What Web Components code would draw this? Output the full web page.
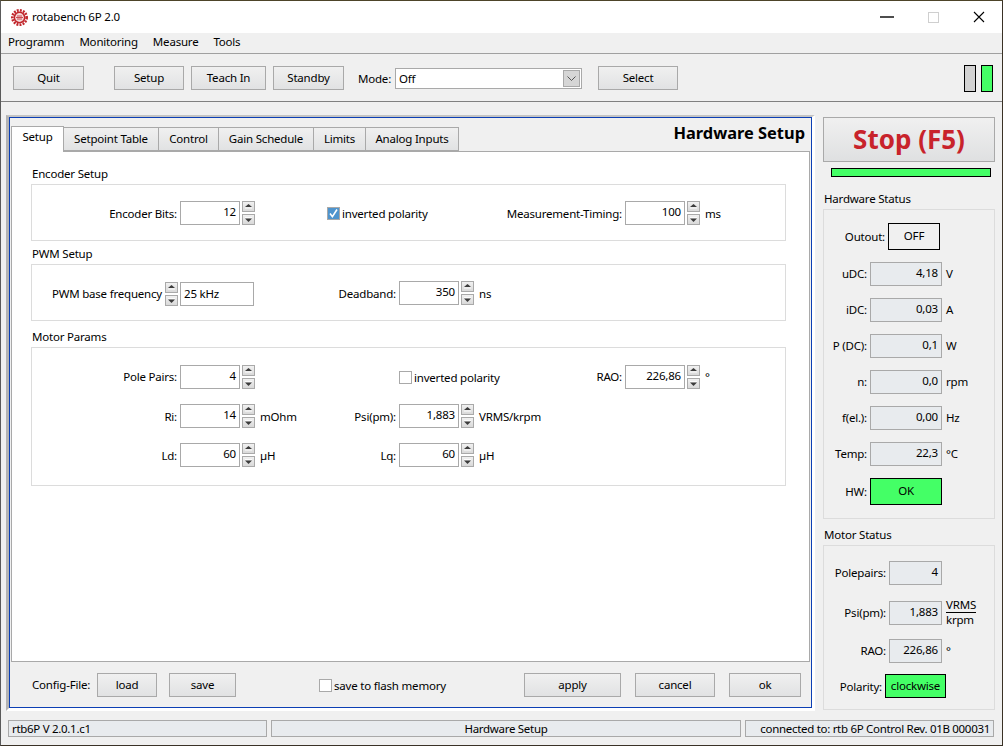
<!DOCTYPE html>
<html>
<head>
<meta charset="utf-8">
<title>rotabench 6P 2.0</title>
<style>
  html, body { margin: 0; padding: 0; background: #3a3226; }
  body { font: 11.5px "Noto Sans", "Liberation Sans", sans-serif; letter-spacing: -0.2px; color: #000; }
</style>
</head>
<body>
<rtb-window>
  <rtb-titlebar slot="top" caption="rotabench 6P 2.0"></rtb-titlebar>
  <rtb-menubar slot="top" items="Programm,Monitoring,Measure,Tools"></rtb-menubar>
  <rtb-toolbar slot="top">
    <rtb-button style="width:71px">Quit</rtb-button>
    <rtb-button style="width:70px;margin-left:30px">Setup</rtb-button>
    <rtb-button style="width:75px;margin-left:7px">Teach In</rtb-button>
    <rtb-button style="width:71px;margin-left:7px">Standby</rtb-button>
    <rtb-combo label="Mode:" value="Off" style="margin-left:14px"></rtb-combo>
    <rtb-button style="width:80px;margin-left:16px">Select</rtb-button>
    <rtb-led color="#d2d2d2" style="margin-left:auto"></rtb-led>
    <rtb-led color="#44ff66" style="margin-left:5px"></rtb-led>
  </rtb-toolbar>

  <rtb-panel slot="left">
    <rtb-tabs slot="tabs" heading="Hardware Setup">
      <rtb-tab active style="width:53px">Setup</rtb-tab>
      <rtb-tab style="width:95px">Setpoint Table</rtb-tab>
      <rtb-tab style="width:60px">Control</rtb-tab>
      <rtb-tab style="width:95px">Gain Schedule</rtb-tab>
      <rtb-tab style="width:52px">Limits</rtb-tab>
      <rtb-tab style="width:93px">Analog Inputs</rtb-tab>
    </rtb-tabs>

    <rtb-group caption="Encoder Setup" style="margin-top:0">
      <rtb-row>
        <rtb-spin label="Encoder Bits:" value="12" style="--lw:145px"></rtb-spin>
        <rtb-check style="margin-left:27px" checked>inverted polarity</rtb-check>
        <rtb-spin label="Measurement-Timing:" value="100" unit="ms" style="--lw:122px"></rtb-spin>
      </rtb-row>
    </rtb-group>

    <rtb-group caption="PWM Setup" style="margin-top:4px">
      <rtb-row>
        <rtb-freq label="PWM base frequency" value="25 kHz"></rtb-freq>
        <rtb-spin label="Deadband:" value="350" unit="ns" style="--lw:96px"></rtb-spin>
      </rtb-row>
    </rtb-group>

    <rtb-group caption="Motor Params" style="margin-top:7px;--pt:17px;--pb:18px">
      <rtb-row>
        <rtb-spin label="Pole Pairs:" value="4" style="--lw:145px;--ly:-1px"></rtb-spin>
        <rtb-check style="margin-left:99px">inverted polarity</rtb-check>
        <rtb-spin label="RAO:" value="226,86" unit="°" style="--lw:122px;--ly:-1px"></rtb-spin>
      </rtb-row>
      <rtb-row style="margin-top:15px">
        <rtb-spin label="Ri:" value="14" unit="mOhm" style="--lw:145px"></rtb-spin>
        <rtb-spin label="Psi(pm):" value="1,883" unit="VRMS/krpm" style="--lw:96px"></rtb-spin>
      </rtb-row>
      <rtb-row style="margin-top:15px">
        <rtb-spin label="Ld:" value="60" unit="µH" style="--lw:145px"></rtb-spin>
        <rtb-spin label="Lq:" value="60" unit="µH" style="--lw:96px"></rtb-spin>
      </rtb-row>
    </rtb-group>

    <span slot="footer" style="width:65px">Config-File:</span>
    <rtb-button slot="footer" style="width:60px">load</rtb-button>
    <rtb-button slot="footer" style="width:67px;margin-left:12px">save</rtb-button>
    <rtb-check slot="footer" style="margin-left:83px">save to flash memory</rtb-check>
    <rtb-button slot="footer" style="width:97px;margin-left:auto">apply</rtb-button>
    <rtb-button slot="footer" style="width:80px;margin-left:14px">cancel</rtb-button>
    <rtb-button slot="footer" style="width:72px;margin-left:14px">ok</rtb-button>
  </rtb-panel>

  <rtb-side slot="right">
    <rtb-stop>Stop (F5)</rtb-stop>
    <rtb-bar></rtb-bar>
    <rtb-statusgroup caption="Hardware Status" style="margin-top:14px;--pt:13px;--pb:13px">
      <rtb-stat label="Outout:" value="OFF" kind="off" style="--lw:64px;--vw:52px;--vh:27px;--ly:0px"></rtb-stat>
      <rtb-stat label="uDC:" value="4,18" unit="V" style="--lw:46px;--vw:72px;margin-top:12px"></rtb-stat>
      <rtb-stat label="iDC:" value="0,03" unit="A" style="--lw:46px;--vw:72px;margin-top:12px"></rtb-stat>
      <rtb-stat label="P (DC):" value="0,1" unit="W" style="--lw:46px;--vw:72px;margin-top:12px"></rtb-stat>
      <rtb-stat label="n:" value="0,0" unit="rpm" style="--lw:46px;--vw:72px;margin-top:12px"></rtb-stat>
      <rtb-stat label="f(el.):" value="0,00" unit="Hz" style="--lw:46px;--vw:72px;margin-top:12px"></rtb-stat>
      <rtb-stat label="Temp:" value="22,3" unit="°C" style="--lw:46px;--vw:72px;margin-top:12px"></rtb-stat>
      <rtb-stat label="HW:" value="OK" kind="ok" style="--lw:46px;--vw:72px;--vh:27px;--ly:0px;margin-top:12px"></rtb-stat>
    </rtb-statusgroup>
    <rtb-statusgroup caption="Motor Status" style="margin-top:8px;--pt:15px;--pb:11px">
      <rtb-stat label="Polepairs:" value="4" style="--lw:65px;--vw:53px"></rtb-stat>
      <rtb-stat label="Psi(pm):" value="1,883" style="--lw:65px;--vw:53px;margin-top:16px">
        <span style="display:block;line-height:14px"><span style="display:block;border-bottom:1px solid #000">VRMS</span>krpm</span>
      </rtb-stat>
      <rtb-stat label="RAO:" value="226,86" unit="°" style="--lw:65px;--vw:53px;margin-top:14px"></rtb-stat>
      <rtb-stat label="Polarity:" value="clockwise" kind="ok" style="--lw:61px;--vw:61px;--ly:0px;--vlh:22px;margin-top:11px"></rtb-stat>
    </rtb-statusgroup>
  </rtb-side>

  <rtb-statusbar slot="bottom">
    <rtb-cell style="width:259px">rtb6P V 2.0.1.c1</rtb-cell>
    <rtb-cell style="width:470px;text-align:center">Hardware Setup</rtb-cell>
    <rtb-cell style="width:249px;text-align:right">connected to: rtb 6P Control Rev. 01B 000031</rtb-cell>
  </rtb-statusbar>
</rtb-window>

<script>
// small base class, every element only has to give its html
class RtbElement extends HTMLElement {
    constructor(){
        super()
        this.attachShadow({mode: "open"})
    }
    connectedCallback(){
        this.shadowRoot.innerHTML = this.getTemplate()
    }
    attr(name, def = ''){
        return this.hasAttribute(name) ? this.getAttribute(name) : def
    }
}

const SPIN_UP = `<svg width="7" height="5" viewBox="0 0 7 5"><path d="M3.5 0L7 3H0z" fill="#3c3c3c"/><path d="M0 4h7" stroke="#fbfbfb" stroke-width="1"/></svg>`
const SPIN_DOWN = `<svg width="7" height="5" viewBox="0 0 7 5"><path d="M0 .5h7" stroke="#fbfbfb" stroke-width="1"/><path d="M0 1.5h7L3.5 5z" fill="#3c3c3c"/></svg>`

class RtbWindow extends RtbElement {
    getTemplate(){
        return `
        <style>
            :host { display: flex; flex-direction: column; box-sizing: border-box; width: 1003px; height: 746px;
                background: #f0f0f0; border-top: 1px solid #4d4429; border-left: 1px solid #5a5a5a; border-right: 1px solid #3a3226; border-bottom: 1px solid #3a3226; overflow: hidden; }
            .main { display: flex; flex: 1; min-height: 0; }
        </style>
        <slot name="top"></slot>
        <div class="main"><slot name="left"></slot><slot name="right"></slot></div>
        <slot name="bottom"></slot>`
    }
}

class RtbTitlebar extends RtbElement {
    getTemplate(){
        return `
        <style>
            :host { display: flex; align-items: center; height: 32px; background: #fff; padding-left: 10px; flex: none; }
            .logo { width: 17px; height: 17px; margin-right: 4px; }
            .cap { padding-bottom: 2px; }
            .ctl { display: flex; margin-left: auto; }
            .ctl div { width: 46px; height: 32px; display: flex; align-items: center; justify-content: center; }
        </style>
        <svg class="logo" viewBox="0 0 17 17">
            <circle cx="8.5" cy="8.5" r="7.2" fill="none" stroke="#c1272d" stroke-width="2.6" stroke-dasharray="1.9 1.2"/>
            <circle cx="8.5" cy="8.5" r="6" fill="#c1272d"/>
            <circle cx="8.5" cy="8.5" r="4.4" fill="#f4d9da"/>
            <path d="M5 8.5h7M6 7h5M6 10h5" stroke="#c1272d" stroke-width=".8"/>
        </svg>
        <span class="cap">${this.attr('caption')}</span>
        <div class="ctl">
            <div><svg width="14" height="2"><path d="M0 1h14" stroke="#000" stroke-width="1.4"/></svg></div>
            <div><svg width="11" height="11"><rect x=".5" y=".5" width="10" height="10" fill="none" stroke="#cfcfcf"/></svg></div>
            <div><svg width="12" height="12"><path d="M1 1l10 10M11 1L1 11" stroke="#000" stroke-width="1.1"/></svg></div>
        </div>`
    }
}

class RtbMenubar extends RtbElement {
    getTemplate(){
        const items = this.attr('items').split(',').map(t => `<span>${t}</span>`).join('')
        return `
        <style>
            :host { display: flex; align-items: center; gap: 15px; box-sizing: border-box; height: 21px; padding: 0 0 4px 7px; flex: none;
                background: #f0f0f0; border-bottom: 1px solid #a0a0a0; }
        </style>
        ${items}`
    }
}

class RtbToolbar extends RtbElement {
    getTemplate(){
        return `
        <style>
            :host { display: flex; align-items: center; box-sizing: border-box; height: 48px; flex: none; padding: 1px 9px 0 12px;
                background: #f0f0f0; border-bottom: 1px solid #808080; }
        </style>
        <slot></slot>`
    }
}

class RtbButton extends RtbElement {
    getTemplate(){
        return `
        <style>
            :host { display: inline-flex; align-items: center; justify-content: center; box-sizing: border-box; height: 24px; flex: none;
                border: 1px solid #a9a9a9; background: linear-gradient(#f0f0f0, #e1e2e3); padding-bottom: 2px; }
        </style>
        <slot></slot>`
    }
}

class RtbCombo extends RtbElement {
    getTemplate(){
        return `
        <style>
            :host { display: inline-flex; align-items: center; flex: none; }
            .l { width: 34px; }
            .box { display: flex; align-items: center; box-sizing: border-box; width: 187px; height: 21px; margin-left: 3px;
                border: 1px solid #a9a9a9; background: #fff; padding: 0 1px 0 3px; }
            .btn { margin-left: auto; width: 17px; height: 17px; box-sizing: border-box; border: 1px solid #a9a9a9; background: #d6d6d6;
                display: flex; align-items: center; justify-content: center; }
        </style>
        <span class="l">${this.attr('label')}</span>
        <div class="box"><span>${this.attr('value')}</span>
            <div class="btn"><svg width="9" height="5"><path d="M.5.5l4 4 4-4" fill="none" stroke="#555"/></svg></div>
        </div>`
    }
}

class RtbLed extends RtbElement {
    getTemplate(){
        return `
        <style>
            :host { display: block; box-sizing: border-box; width: 12px; height: 27px; flex: none; border: 1px solid #000; background: ${this.attr('color')}; }
        </style>`
    }
}

class RtbPanel extends RtbElement {
    getTemplate(){
        return `
        <style>
            :host { display: flex; flex-direction: column; box-sizing: border-box; width: 809px; height: 596px; margin: 13px 0 0 5px; flex: none;
                border-style: solid; border-width: 2px 3px 3px 3px; border-color: #c4c4c4 #fff #fff #b4b4b4; }
            .blue { flex: 1; display: flex; flex-direction: column; border: 1px solid #0c3fb4; min-height: 0; padding-top: 9px; }
            .pane { box-sizing: border-box; height: 511px; margin: 0 1px; border: 1px solid #a9a9a9; background: #fff; padding: 13px 23px 0 19px; }
            .tabs { margin: 0 1px; height: 24px; display: block; }
            .footer { display: flex; align-items: flex-start; padding: 11px 10px 0 22px; }
            slot[name=footer]::slotted(span) { line-height: 24px; }
        </style>
        <div class="blue">
            <div class="tabs"><slot name="tabs"></slot></div>
            <div class="pane"><slot></slot></div>
            <div class="footer"><slot name="footer"></slot></div>
        </div>`
    }
}

class RtbTabs extends RtbElement {
    getTemplate(){
        return `
        <style>
            :host { display: flex; height: 24px; position: relative; z-index: 1; }
            .h { margin-left: auto; margin-right: 5px; font-weight: bold; font-size: 16.4px; letter-spacing: 0; line-height: 12px; white-space: nowrap; }
        </style>
        <slot></slot>
        <span class="h">${this.attr('heading')}</span>`
    }
}

class RtbTab extends RtbElement {
    getTemplate(){
        const on = this.hasAttribute('active')
        return `
        <style>
            :host { display: flex; align-items: center; justify-content: center; box-sizing: border-box; flex: none; height: ${on ? 26 : 24}px;
                ${on ? 'margin-top:-1px;' : ''} border: 1px solid #a9a9a9; border-left: ${on ? '1px solid #a9a9a9' : 'none'};
                border-bottom: ${on ? 'none' : '1px solid #a9a9a9'};
                background: ${on ? '#fff' : 'linear-gradient(#f0f0f0, #e1e2e3)'}; padding-bottom: ${on ? 6 : 2}px; }
        </style>
        <slot></slot>`
    }
}

class RtbGroup extends RtbElement {
    getTemplate(){
        return `
        <style>
            :host { display: block; }
            .t { line-height: 16px; margin: 0 0 2px 1px; padding-top: 1px; }
            .b { border: 1px solid #dcdcdc; padding: var(--pt, 16px) 0 var(--pb, 15px) 0; }
        </style>
        <div class="t">${this.attr('caption')}</div>
        <div class="b"><slot></slot></div>`
    }
}

class RtbRow extends RtbElement {
    getTemplate(){
        return `
        <style>
            :host { display: grid; grid-template-columns: 268px 200px 1fr; align-items: start; }
        </style>
        <slot></slot>`
    }
}

class RtbSpinButtons extends RtbElement {
    getTemplate(){
        return `
        <style>
            :host { display: flex; flex-direction: column; gap: 2px; width: 13px; flex: none; }
            div { box-sizing: border-box; height: 11px; border: 1px solid #a9a9a9; background: linear-gradient(#f1f1f1, #d9d9d9);
                display: flex; align-items: center; justify-content: center; }
        </style>
        <div>${SPIN_UP}</div><div>${SPIN_DOWN}</div>`
    }
}

class RtbSpin extends RtbElement {
    getTemplate(){
        return `
        <style>
            :host { display: flex; align-items: center; white-space: nowrap; height: 24px; }
            .l { width: var(--lw, 100px); text-align: right; flex: none; position: relative; top: var(--ly, 0px); }
            .v { box-sizing: border-box; width: 60px; height: 24px; margin: 0 2px 0 3px; flex: none; border: 1px solid #a9a9a9; background: #fff;
                text-align: right; padding-right: 3px; line-height: 20px; }
            .u { margin-left: 5px; position: relative; top: var(--ly, 0px); }
        </style>
        <span class="l">${this.attr('label')}</span>
        <div class="v">${this.attr('value')}</div>
        <rtb-spin-buttons></rtb-spin-buttons>
        <span class="u">${this.attr('unit')}</span>`
    }
}

class RtbFreq extends RtbElement {
    getTemplate(){
        return `
        <style>
            :host { display: flex; align-items: center; white-space: nowrap; height: 24px; }
            .l { width: 130px; text-align: right; flex: none; }
            .v { box-sizing: border-box; width: 74px; height: 24px; margin: 1px 0 0 2px; flex: none; border: 1px solid #a9a9a9; background: #fff;
                padding-left: 3px; line-height: 22px; }
            rtb-spin-buttons { margin: 2px 0 0 3px; }
        </style>
        <span class="l">${this.attr('label')}</span>
        <rtb-spin-buttons></rtb-spin-buttons>
        <div class="v">${this.attr('value')}</div>`
    }
}

class RtbCheck extends RtbElement {
    getTemplate(){
        const on = this.hasAttribute('checked')
        return `
        <style>
            :host { display: flex; align-items: center; height: 24px; white-space: nowrap; flex: none; }
            .c { box-sizing: border-box; width: 13px; height: 13px; margin: 1px 2px 0 0; flex: none; border: 1px solid #a9a9a9; background: ${on ? '#4f94cd' : '#fff'}; }
            svg { display: block; }
        </style>
        <div class="c">${on ? '<svg width="11" height="11"><path d="M2 5.5l2.4 3.2L9 1.5" fill="none" stroke="#fff" stroke-width="1.6"/></svg>' : ''}</div>
        <span><slot></slot></span>`
    }
}

class RtbSide extends RtbElement {
    getTemplate(){
        return `
        <style>
            :host { display: block; box-sizing: border-box; width: 172px; margin: 15px 0 0 8px; flex: none; }
        </style>
        <slot></slot>`
    }
}

class RtbStop extends RtbElement {
    getTemplate(){
        return `
        <style>
            :host { display: flex; align-items: center; justify-content: center; box-sizing: border-box; height: 45px; padding-bottom: 2px;
                border: 1px solid #a9a9a9; background: linear-gradient(#f0f0f0, #dfe0e1);
                color: #c8232b; font-weight: bold; font-size: 26px; letter-spacing: 0; }
        </style>
        <slot></slot>`
    }
}

class RtbBar extends RtbElement {
    getTemplate(){
        return `
        <style>
            :host { display: block; box-sizing: border-box; height: 9px; width: 160px; margin: 6px 0 0 8px; border: 1px solid #000; background: #44ff66; }
        </style>`
    }
}

class RtbStatusgroup extends RtbElement {
    getTemplate(){
        return `
        <style>
            :host { display: block; }
            .t { line-height: 16px; margin: 0 0 2px 1px; }
            .b { border: 1px solid #dcdcdc; padding: var(--pt, 13px) 0 var(--pb, 13px) 0; }
        </style>
        <div class="t">${this.attr('caption')}</div>
        <div class="b"><slot></slot></div>`
    }
}

class RtbStat extends RtbElement {
    getTemplate(){
        const kind = this.attr('kind')
        let look = 'border:1px solid #a9a9a9;background:#e8ebee;text-align:right;padding-right:3px;'
        if(kind === 'ok') look = 'border:1px solid #000;background:#44ff66;text-align:center;'
        if(kind === 'off') look = 'border:1px solid #000;background:#f0f0f0;text-align:center;'
        return `
        <style>
            :host { display: flex; align-items: center; white-space: nowrap; height: var(--vh, 24px); }
            .l { width: calc(var(--lw) - 3px); text-align: right; flex: none; position: relative; top: var(--ly, -1px); }
            .v { box-sizing: border-box; width: var(--vw); height: var(--vh, 24px); line-height: var(--vlh, calc(var(--vh, 24px) - 4px)); margin-left: 3px; flex: none; ${look} }
            .u { margin-left: 4px; position: relative; top: var(--ly, -1px); }
        </style>
        <span class="l">${this.attr('label')}</span>
        <div class="v">${this.attr('value')}</div>
        <span class="u">${this.attr('unit')}<slot></slot></span>`
    }
}

class RtbStatusbar extends RtbElement {
    getTemplate(){
        return `
        <style>
            :host { display: flex; gap: 4px; flex: none; height: 17px; padding-left: 7px; margin-bottom: 8px; }
        </style>
        <slot></slot>`
    }
}

class RtbCell extends RtbElement {
    getTemplate(){
        return `
        <style>
            :host { display: block; box-sizing: border-box; flex: none; height: 17px; line-height: 15px; border: 1px solid #a9a9a9; background: #e8ebee;
                padding: 0 3px; white-space: nowrap; overflow: hidden; letter-spacing: -0.3px; }
        </style>
        <slot></slot>`
    }
}

customElements.define("rtb-window", RtbWindow)
customElements.define("rtb-titlebar", RtbTitlebar)
customElements.define("rtb-menubar", RtbMenubar)
customElements.define("rtb-toolbar", RtbToolbar)
customElements.define("rtb-button", RtbButton)
customElements.define("rtb-combo", RtbCombo)
customElements.define("rtb-led", RtbLed)
customElements.define("rtb-panel", RtbPanel)
customElements.define("rtb-tabs", RtbTabs)
customElements.define("rtb-tab", RtbTab)
customElements.define("rtb-group", RtbGroup)
customElements.define("rtb-row", RtbRow)
customElements.define("rtb-spin-buttons", RtbSpinButtons)
customElements.define("rtb-spin", RtbSpin)
customElements.define("rtb-freq", RtbFreq)
customElements.define("rtb-check", RtbCheck)
customElements.define("rtb-side", RtbSide)
customElements.define("rtb-stop", RtbStop)
customElements.define("rtb-bar", RtbBar)
customElements.define("rtb-statusgroup", RtbStatusgroup)
customElements.define("rtb-stat", RtbStat)
customElements.define("rtb-statusbar", RtbStatusbar)
customElements.define("rtb-cell", RtbCell)
</script>
</body>
</html>
